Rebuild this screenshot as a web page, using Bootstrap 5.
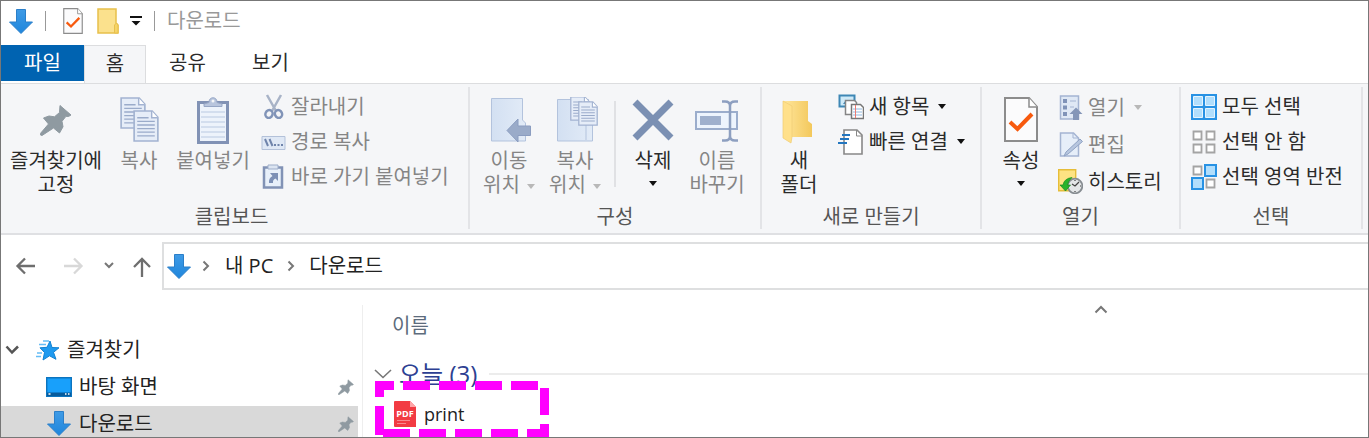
<!DOCTYPE html>
<html lang="ko">
<head>
<meta charset="utf-8">
<meta name="viewport" content="width=device-width, initial-scale=1">
<title>다운로드</title>
<link href="https://cdn.jsdelivr.net/npm/bootstrap@5.3.0/dist/css/bootstrap.min.css" rel="stylesheet">
<style>
body{font-family:"Open Sans","Noto Sans CJK KR",sans-serif;font-size:20px;line-height:24px;color:#2b2b2b;background:#fff}
button{background:none;border:0;padding:0;color:inherit}
a{color:inherit;text-decoration:none}
svg{display:block;flex:none}
.win{border:1px solid #777}
.titlebar{height:44px;padding:0 8px 4px;color:#999}
.titlebar .bar{width:1px;height:20px;background:#999;margin:0 12px}
.tabs button{width:83px;height:38px;padding-bottom:2px}
.tabs .file{background:#0063b1;color:#fff;height:36px;padding-bottom:0}
.tabs .home{width:62px;background:#f5f6f8;border:1px solid #dcdddf;border-bottom:0;margin-bottom:-1px;height:39px}
.ribbon{background:#f5f6f8;border-top:1px solid #dcdddf;border-bottom:2px solid #dfe0e3;padding:3px 0 4px}
.group{border-right:2px solid #e3e4e7;padding:10px 6px 0}
.tools{height:108px}
.cap{color:#555;text-align:center;height:24px}
.big{line-height:24px;text-align:center;display:flex;flex-direction:column;align-items:center;white-space:nowrap}
.big svg.ic{margin-bottom:4px}
.w-s{width:62px}.w-m{width:66px}.w-l{width:92px}.w-xl{width:110px}
.w-c{width:56px}
.g-clip{width:469px}.g-org{width:292px}.g-new{width:220px}.g-open{width:199px}.g-sel{width:182px}
.dim{color:#858585}
.smalls{display:flex;flex-direction:column;gap:10px;margin-top:-3px}
.smalls button{display:flex;align-items:center;gap:5px;white-space:nowrap;height:25px}
.g-clip .smalls{margin-left:2px}
.g-open .smalls{gap:12px;margin-top:-2px}
.vline{width:2px;height:86px;background:#e0e1e4;margin:4px 6px 0}
.caret{display:inline-block;width:0;height:0;border:4px solid transparent;border-top:5px solid #111;border-bottom:0;margin-left:7px;vertical-align:3px}
.dim .caret{border-top-color:#b8b8b8}
.addr{padding:7px 0 6px 13px}
.path{height:48px;border:2px solid #dedfe0;border-right:0;padding-left:3px;color:#222}
.side{width:361px;padding-top:36px;color:#222}
.side a{height:37px;display:flex;align-items:center;margin-right:4px;padding-bottom:2px}
.side a.sel{background:#d9d9d9}
.files{border-left:1px solid #eee;margin-top:9px}
.colhead{color:#5d6b7c;padding-left:29px}
.sort{padding-right:260px}
.day{font-size:24px;line-height:36px;color:#2d3f92;margin-top:18px;padding-left:11px}
.day i{height:2px;background:#ececec}
.item{height:36px;margin-top:4px;padding-left:31px;font-size:18px;color:#222}
.frame{position:absolute;left:12px;top:-15px}
</style>
</head>
<body>
<svg width="0" height="0" class="position-absolute">
<defs>
<linearGradient id="gb" x2="0" y2="1"><stop stop-color="#3f9be6"/><stop offset="1" stop-color="#1f86dc"/></linearGradient>
<linearGradient id="gf"><stop stop-color="#ffe69c"/><stop offset="1" stop-color="#f3c85c"/></linearGradient>
<linearGradient id="gl"><stop stop-color="#d3e0f2"/><stop offset="1" stop-color="#e2ebf7"/></linearGradient>
<symbol id="down" viewBox="0 0 24 25"><path d="M7.500.5h9v12.500h7L12 24.500.5 13h7z" fill="url(#gb)" stroke="#2b7fc9"/></symbol>
<symbol id="pin" viewBox="0 0 32 32"><path d="M20 1.500 31 11l-2.500 1.500-2.500-.2-4 5 1 5.500-3.500 6.200-6-5L2 31.500.5 31l.3-2 7.700-9L3.500 14l5.500-2 5.500.8 5-4.300z" fill="#8f9aa1" stroke="#8f9aa1" stroke-linejoin="round"/></symbol>
<symbol id="page" viewBox="0 0 25 31"><path d="M1 1h17.500L24 7v23H1z" fill="#e6edf8" stroke="#a3b3d1" stroke-width="1.600"/><path d="M18 1v6.500h6" fill="#fff" stroke="#a3b3d1" stroke-width="1.400"/><path d="M4 7.500h11M4 11h17M4 14.500h17M4 18h17M4 21.500h17M4 25h17" stroke="#9aabca" stroke-width="1.300"/></symbol>
<symbol id="check" viewBox="0 0 34 45"><path d="M1 1h24l8 9v34H1z" fill="#fbfbfc" stroke="#8c8c8c" stroke-width="2"/><path d="M25 1v9h8" fill="#fff" stroke="#8c8c8c" stroke-width="1.500"/><path d="M6 25l7.500 7L28 17" fill="none" stroke="#f7590d" stroke-width="4"/></symbol>
<symbol id="chev" viewBox="0 0 8 12"><path d="M1.500 1.500 6 6l-4.500 4.500" fill="none" stroke="#777" stroke-width="2"/></symbol>
</defs>
</svg>
<div class="win vh-100 overflow-hidden d-flex flex-column">
  <header class="titlebar d-flex align-items-center flex-shrink-0">
    <svg width="24" height="25"><use href="#down"/></svg>
    <span class="bar"></span>
    <button aria-label="속성" class="ms-1"><svg width="22" height="26"><use href="#check"/></svg></button>
    <button aria-label="새 폴더" style="margin-left:13px"><svg width="22" height="26" viewBox="0 0 22 26"><path d="M1 1h18v14l2 2v8H1z" fill="#fbe18d" stroke="#e8c04b" stroke-width="1.500"/><path d="M17.500 25v-8l2-2 1.500 2v8z" fill="#f5d469" stroke="#e8c04b"/></svg></button>
    <button aria-label="사용자 지정" style="margin-left:11px"><svg width="12" height="10" viewBox="0 0 12 10"><path d="M0 0h12v2H0zM1.500 5h9L6 9.500z" fill="#111"/></svg></button>
    <span class="bar"></span>
    <span>다운로드</span>
  </header>
  <nav class="tabs d-flex flex-shrink-0">
    <button class="file">파일</button><button class="home">홈</button><button>공유</button><button>보기</button>
  </nav>
  <section class="ribbon d-flex flex-shrink-0">
    <div class="group g-clip ps-0">
      <div class="tools d-flex align-items-start">
        <button class="big w-xl"><svg class="ic" width="48" height="48"><use href="#pin" x="8" y="7" width="32" height="32"/></svg><span>즐겨찾기에</span><span>고정</span></button>
        <button class="big dim w-c"><svg class="ic" width="48" height="48"><use href="#page" x="5" y="0" width="26" height="32"/><use href="#page" x="18" y="13" width="26" height="32"/></svg>복사</button>
        <button class="big dim w-l"><svg class="ic" width="48" height="48" viewBox="0 0 48 48"><path d="M9.500 5.500h29v40h-29z" fill="#edf3fb" stroke="#8192b5" stroke-width="3"/><path d="M12 15h24M12 20h24M12 25h24M12 30h24M12 35h24M12 40h24" stroke="#cad7ea" stroke-width="1.500"/><path d="M15 9.500V7l5-1.500C20 2 22 .8 24 .8s4 1.200 4 4.700L33 7v2.500z" fill="#b8c5dd" stroke="#96a6c5"/><circle cx="24" cy="4" r="1.500" fill="#f5f6f8"/></svg>붙여넣기</button>
        <div class="smalls dim">
          <button><svg width="25" height="25" viewBox="0 0 25 25"><path d="M6 1l9 16M20 1l-9 16" stroke="#a8b3c7" stroke-width="2.500"/><g fill="none" stroke="#8194b8" stroke-width="2.500"><ellipse cx="8" cy="20" rx="3.500" ry="4" transform="rotate(25 8 20)"/><ellipse cx="17.500" cy="20" rx="3.500" ry="4" transform="rotate(-25 17.500 20)"/></g></svg>잘라내기</button>
          <button><svg width="25" height="25" viewBox="0 0 25 25"><path d="M1 7.500h23v13H1z" fill="#dfe8f5" stroke="#b3c1d9"/><path d="M4 10l3 7M8.500 10l3 7" stroke="#6f84ab" stroke-width="2"/><path d="M13 16h2M16.500 16h2M20 16h2" stroke="#6f84ab" stroke-width="2"/></svg>경로 복사</button>
          <button><svg width="25" height="25" viewBox="0 0 25 25"><path d="M3 3.500h18v20H3z" fill="#e8f0fa" stroke="#8192b5" stroke-width="2.500"/><path d="M7 1h10v4H7z" fill="#dbe4f1" stroke="#9dadc9"/><path d="M9 9h8v8l-2.500-2.500q-3 1-2.500 4.500H8q-.5-5 3.500-7z" fill="#7c90b6"/></svg>바로 가기 붙여넣기</button>
        </div>
      </div>
      <div class="cap">클립보드</div>
    </div>
    <div class="group g-org">
      <div class="tools d-flex align-items-start">
        <button class="big dim w-m"><svg class="ic" width="48" height="48" viewBox="0 0 48 48"><path d="M6.500 1.500h31V23l3 3v18h-34z" fill="url(#gl)" stroke="#b3c3dd"/><path d="M22 33.500 33 22v7h12.500v9.500H33V45z" fill="#9aabc9" stroke="#8b9dc0"/></svg><span>이동</span><span>위치<i class="caret"></i></span></button>
        <button class="big dim w-m"><svg class="ic" width="48" height="48" viewBox="0 0 48 48"><path d="M6.500 2.500h31V25l4 3v16h-35z" fill="url(#gl)" stroke="#b3c3dd"/><path d="M35 43V27l3-2 3 3" fill="none" stroke="#b3c3dd"/><use href="#page" x="19" y="-1" width="20" height="25"/><use href="#page" x="27" y="4" width="20" height="25"/></svg><span>복사</span><span>위치<i class="caret"></i></span></button>
        <div class="vline"></div>
        <button class="big w-s"><svg class="ic" width="48" height="48" viewBox="0 0 48 48"><path d="M6 5l36 36M42 5 6 41" stroke="#7b90b3" stroke-width="7"/></svg>삭제<i class="caret m-0 mt-2"></i></button>
        <button class="big dim w-m"><svg class="ic" width="48" height="48" viewBox="0 0 48 48"><path d="M3 15h41v17H3z" fill="#edf4fd" stroke="#9badcc" stroke-width="2"/><path d="M7 19h21v9H7z" fill="#9fb0cd"/><path d="M29 4.500h3q5 0 5 4.500v30q0 4.500-5 4.500h-3M45 4.500h-3q-5 0-5 4.500v30q0 4.500 5 4.500h3" fill="none" stroke="#8d9fc0" stroke-width="2.500"/></svg><span>이름</span><span>바꾸기</span></button>
      </div>
      <div class="cap">구성</div>
    </div>
    <div class="group g-new">
      <div class="tools d-flex align-items-start">
        <button class="big w-s"><svg class="ic" width="48" height="48" viewBox="0 0 48 48"><path d="M8 4h25v20l4 3v13H10z" fill="url(#gf)"/><path d="M8 4l9 5v31l-1 6-8-5z" fill="#ffe08a" stroke="#efcc72" stroke-width=".7"/></svg><span>새</span><span>폴더</span></button>
        <div class="smalls ms-2">
          <button><svg width="26" height="26" viewBox="0 0 26 26"><path d="M1.500 1.500h15v11h-15z" fill="#cfeaf8" stroke="#3e87b5" stroke-width="2"/><path d="M5 10l3-4 4 4z" fill="#3e87b5"/><path d="M7.500 6.500h9l2 2v12h-11z" fill="#fff" stroke="#858585" stroke-width="1.500"/><path d="M13.500 10.500h9l3 3v11h-12z" fill="#fff" stroke="#777" stroke-width="1.500"/><path d="M15 15h9M15 18h9M15 21h9" stroke="#91b8df"/><path d="M17.500 11v13" stroke="#ee7a70"/></svg>새 항목<i class="caret m-0 ms-1"></i></button>
          <button><svg width="26" height="26" viewBox="0 0 26 26"><path d="M6 1h13l5 5v19H6z" fill="#fff" stroke="#888" stroke-width="1.600"/><path d="M18.500 1v6H24" fill="none" stroke="#888"/><path d="M4 6h8M2 10h9M0 14h9" stroke="#2376bf" stroke-width="2"/></svg>빠른 연결<i class="caret m-0 ms-1"></i></button>
        </div>
      </div>
      <div class="cap">새로 만들기</div>
    </div>
    <div class="group g-open">
      <div class="tools d-flex align-items-start">
        <button class="big w-m"><svg class="ic" width="48" height="48"><use href="#check" x="7" y="0" width="34" height="45"/></svg>속성<i class="caret m-0 mt-2"></i></button>
        <div class="smalls ms-1">
          <button class="dim"><svg width="25" height="25" viewBox="0 0 25 25"><path d="M2.500 1h18v23h-18z" fill="#dfe8f5" stroke="#a4b4d2" stroke-width="1.500"/><path d="M5 4h4v4H5zM5 10.500h4v4H5zM5 17h4v4H5z" fill="#8093b8"/><path d="M12 6h6M12 12h4" stroke="#a4b4d2"/><path d="M18 12.500l6.500 6.500H21v6h-6v-6h-3.500z" fill="#8496b8"/></svg>열기<i class="caret m-0 ms-1"></i></button>
          <button class="dim"><svg width="25" height="25" viewBox="0 0 25 25"><path d="M2.500 1h13l5 5v18h-18z" fill="#e6eef9" stroke="#a4b4d2" stroke-width="1.500"/><path d="M15 1v5h5" fill="none" stroke="#a4b4d2"/><path d="M22 7l2.500 2.500L10 22l-4 2 2-4z" fill="#b7c6df" stroke="#8fa2c3"/></svg>편집</button>
          <button><svg width="25" height="25" viewBox="0 0 25 25"><path d="M.7.7h17v21H.7z" fill="#fde383" stroke="#e6bd39" stroke-width="1.400"/><circle cx="17" cy="17" r="7.300" fill="#e3e6e8" stroke="#878d92" stroke-width="1.800"/><path d="M17 17l-3-2M17 17l4-4M17 11v1M17 22v1M22 17h1" stroke="#444" stroke-width="1.200"/><path d="M14 8.500Q6 9.500 5 16H2l5.500 6 5-6H9.500q.5-4 4.500-7.500z" fill="#28b32b" stroke="#158c1c" stroke-width=".7"/></svg>히스토리</button>
        </div>
      </div>
      <div class="cap">열기</div>
    </div>
    <div class="group g-sel">
      <div class="tools d-flex align-items-start">
        <div class="smalls ps-1">
          <button><svg width="26" height="26" viewBox="0 0 26 26"><path d="M0 0h26v26H0z" fill="#2892e4"/><path d="M2.500 2.500h9v9h-9zM14.500 2.500h9v9h-9zM2.500 14.500h9v9h-9zM14.500 14.500h9v9h-9z" fill="#b1defc" stroke="#e4f4ff"/></svg>모두 선택</button>
          <button><svg width="26" height="26" viewBox="0 0 26 26"><path d="M2.500 2.500h8v8h-8zM15.500 2.500h8v8h-8zM2.500 15.500h8v8h-8zM15.500 15.500h8v8h-8z" fill="#fff" stroke="#a4a4a4" stroke-width="1.800"/></svg>선택 안 함</button>
          <button><svg width="26" height="26" viewBox="0 0 26 26"><path d="M2.500 2.500h8v8h-8zM15.500 15.500h8v8h-8z" fill="#fff" stroke="#a4a4a4" stroke-width="1.800"/><path d="M14 1h11v11H14zM1 14h11v11H1z" fill="#b1defc" stroke="#2892e4" stroke-width="2"/></svg>선택 영역 반전</button>
        </div>
      </div>
      <div class="cap">선택</div>
    </div>
  </section>
  <nav class="addr d-flex align-items-center flex-shrink-0">
    <button aria-label="뒤로"><svg width="24" height="24" viewBox="0 0 24 24"><path d="M21 12H4M11 4.500 3.500 12l7.500 7.500" fill="none" stroke="#6e6e6e" stroke-width="2.300"/></svg></button>
    <button aria-label="앞으로" style="margin-left:23px"><svg width="24" height="24" viewBox="0 0 24 24"><path d="M3 12h17M13 4.500l7.500 7.500-7.500 7.500" fill="none" stroke="#d8d8d8" stroke-width="2.300"/></svg></button>
    <button aria-label="최근 위치" class="ms-3"><svg width="16" height="12" viewBox="0 0 16 12"><path d="M4 3l4 4 4-4" fill="none" stroke="#777" stroke-width="2"/></svg></button>
    <button aria-label="위로" style="margin-left:13px"><svg width="24" height="24" viewBox="0 0 24 24"><path d="M12 23V5M4 13l8-8 8 8" fill="none" stroke="#6e6e6e" stroke-width="2.300"/></svg></button>
    <div class="path d-flex align-items-center flex-grow-1 ms-2">
      <svg width="24" height="25"><use href="#down"/></svg>
      <svg width="8" height="12" style="margin-left:11px;margin-right:15px"><use href="#chev"/></svg>
      <a href="#">내 PC</a>
      <svg width="8" height="12" style="margin-left:14px;margin-right:14px"><use href="#chev"/></svg>
      <a href="#">다운로드</a>
    </div>
  </nav>
  <main class="d-flex flex-grow-1">
    <nav class="side flex-shrink-0">
      <a href="#"><svg width="14" height="10" viewBox="0 0 14 10" class="ms-1"><path d="M1.500 1.500 7 7.500l6-6" fill="none" stroke="#555" stroke-width="2.500"/></svg><svg width="24" height="22" viewBox="0 0 24 22" style="margin:0 7px 0 17px"><path d="M14 2l2 6.500 7 .3-5.500 4.500 2.500 7-6.500-3.500L7 21l1.500-7.500L4 8.800l7-.5z" fill="#1e9af0" stroke="#1282d2"/><path d="M7 2h6M3 5.500h7M1 14h5M0 17.500h5" stroke="#66bdf5" stroke-width="1.500"/></svg>즐겨찾기</a>
      <a href="#"><svg width="26" height="20" viewBox="0 0 26 20" style="margin:0 7px 0 45px"><path d="M.7.700h24.600v18.600H.7z" fill="#18a0fb" stroke="#0c74bf" stroke-width="1.400"/><path d="M1 15.500h24V19H1z" fill="#075b9c"/><path d="M2.500 17h2M19 17h1.500M22 17h1.500" stroke="#fff" stroke-width="1.500"/></svg>바탕 화면<svg width="16" height="16" class="ms-auto me-1"><use href="#pin"/></svg></a>
      <a href="#" class="sel"><svg width="26" height="25" style="margin:0 7px 0 45px"><use href="#down" width="26" height="25"/></svg>다운로드<svg width="16" height="16" class="ms-auto me-1"><use href="#pin"/></svg></a>
    </nav>
    <section class="files flex-grow-1">
      <div class="sort d-flex justify-content-end"><svg width="14" height="9" viewBox="0 0 14 9"><path d="M1.500 7.500 7 2l5.500 5.500" fill="none" stroke="#777" stroke-width="2"/></svg></div>
      <div class="colhead"><button>이름</button></div>
      <div class="day d-flex align-items-center"><svg width="18" height="10" viewBox="0 0 18 10" style="margin-right:7px"><path d="M1 1l8 7.500L17 1" fill="none" stroke="#777" stroke-width="1.600"/></svg>오늘 (3)<i class="flex-grow-1" style="margin-left:12px"></i></div>
      <div class="item position-relative d-flex align-items-center">
        <svg width="22" height="26" viewBox="0 0 22 26" style="margin-right:8px"><path d="M1 0h15l6 6v20H1q-1 0-1-1V1q0-1 1-1z" fill="#f23b43"/><path d="M16 0l6 6h-6z" fill="#ffa5a8"/><text x="11" y="16" text-anchor="middle" font-family="Open Sans" font-weight="700" font-size="9" fill="#fff">PDF</text><path d="M3 19.500h13M3 22.500h9" stroke="#f9898d"/></svg>
        <a href="#">print</a>
        <svg class="frame" width="174" height="58" viewBox="0 0 174 58"><g fill="none" stroke="#f0f" stroke-width="9"><path d="M0 4.500h164" stroke-dasharray="19 9 27 9 27 9 27 9 27 9"/><path d="M169.500 7v51" stroke-dasharray="27 9"/><path d="M4.500 0v54" stroke-dasharray="16 9 29 9"/><path d="M8 52.500h166" stroke-dasharray="27 9"/></g></svg>
      </div>
    </section>
  </main>
</div>
<script src="https://cdn.jsdelivr.net/npm/bootstrap@5.3.0/dist/js/bootstrap.bundle.min.js"></script>
</body>
</html>
